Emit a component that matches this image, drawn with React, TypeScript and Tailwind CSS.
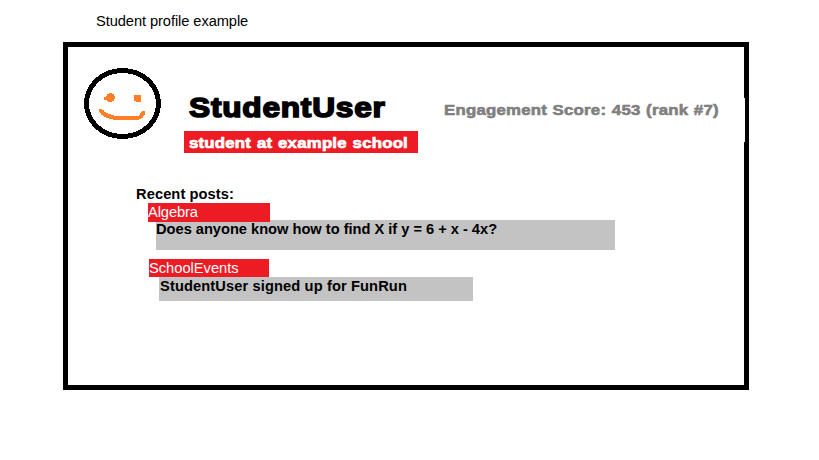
import React from "react";

const heavy =
  "origin-left whitespace-nowrap font-black [-webkit-text-stroke-color:currentColor]";

function Avatar() {
  return (
    <svg className="mt-[21px] ml-4 h-[71px] w-[77px] shrink-0" viewBox="0 0 77 71" shapeRendering="crispEdges" fill="none">
      <ellipse cx="38.5" cy="35.5" rx="36" ry="33" stroke="#000" strokeWidth="5" />
      <path d="M20 29h2v-1h1v-2h2v-1h3v1h2v2h1v3h-1v2h-2v1h-4v-1h-1v-1h-3zM50 27h7v7h-5v-1h-2z" fill="#ff7f27" />
      <path d="M15 41h3v1h2v2h2v1h2v1h3v1h3v1h25v-1h1v-2h1v-1h1v-1h3v4h-1v1h-1v2h-2v1h-2v1H29v-1h-4v-1h-3v-1h-2v-1h-1v-1h-2v-2h-1v-1h-1z" fill="#ff7f27" />
    </svg>
  );
}

function Post({ group, text, groupClass, textClass }: { group: string; text: string; groupClass: string; textClass: string }) {
  return (
    <article>
      <div className={`relative bg-[#ed1c24] pt-px text-white ${groupClass}`}>{group}</div>
      <div className={`bg-[#c3c3c3] font-bold text-black ${textClass}`}>
        <p className="relative pt-px">{text}</p>
      </div>
    </article>
  );
}

export default function App() {
  return (
    <main className="h-[460px] w-[819px] overflow-hidden bg-white font-['Liberation_Sans',Arial,sans-serif] text-[14.67px] leading-[17px] text-black">
      <h1 className="h-[42px] pt-[13px] pl-24 tracking-[-0.08px]">Student profile example</h1>
      <section className="ml-[63px] flex h-[348px] w-[686px] border-[5px] border-black">
        <div className="min-w-0 flex-1">
          <header className="flex h-[138px]">
            <Avatar />
            <div className="ml-[23px] w-[234px] shrink-0 pt-[43px]">
              <h2 className={`ml-[4.5px] h-[41px] w-max scale-x-[1.11] text-[28.5px] leading-[34px] tracking-[0.7px] [-webkit-text-stroke-width:1.6px] ${heavy}`}>StudentUser</h2>
              <div className="h-[22px] bg-[#ed1c24] pl-[5px] text-white">
                <p className={`w-max scale-x-[1.12] text-[15px] leading-[23px] tracking-[0.19px] [word-spacing:0.8px] [-webkit-text-stroke-width:0.7px] ${heavy}`}>student at example school</p>
              </div>
            </div>
            <p className={`mt-[54px] ml-[26px] h-[18px] w-max scale-x-[1.12] text-[15px] leading-[18px] tracking-[0.2px] text-[#7f7f7f] [word-spacing:0.6px] [-webkit-text-stroke-width:0.6px] ${heavy}`}>Engagement Score: 453 (rank #7)</p>
          </header>
          <h3 className="ml-[68px] h-[18px] pt-px font-bold tracking-[0.08px]">Recent posts:</h3>
          <div className="flex flex-col gap-[9px]">
            <Post
              group="Algebra"
              text="Does anyone know how to find X if y = 6 + x - 4x?"
              groupClass="ml-[80px] -mb-[2px] h-[19px] w-[122px] tracking-[-0.1px]"
              textClass="ml-[88px] h-[30px] w-[459px] tracking-[-0.02px]"
            />
            <Post
              group="SchoolEvents"
              text="StudentUser signed up for FunRun"
              groupClass="ml-[81px] h-[18px] w-[120px]"
              textClass="ml-[91px] h-[24px] w-[314px] pl-px tracking-[0.11px]"
            />
          </div>
        </div>
        <div className="mt-[51px] -mr-px h-[44px] w-px bg-white" />
      </section>
    </main>
  );
}
